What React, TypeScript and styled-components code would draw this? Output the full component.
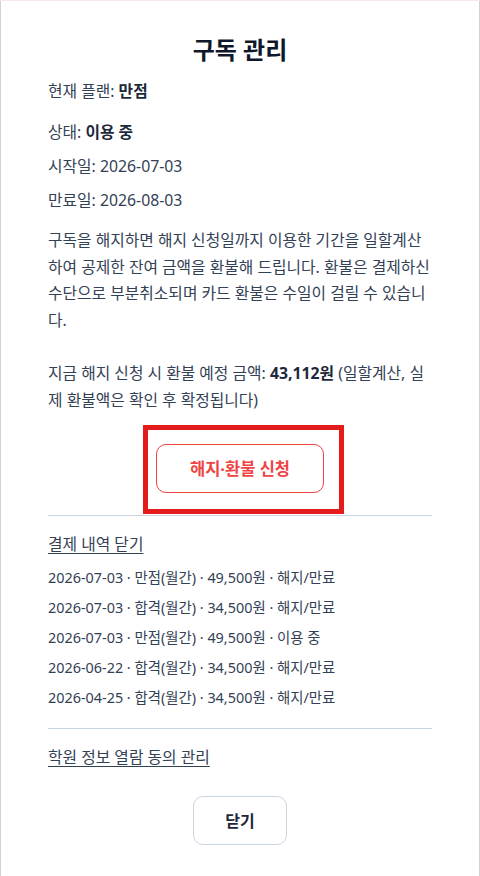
import React from "react";
import styled, { createGlobalStyle } from "styled-components";

const GlobalStyle = createGlobalStyle`
  html, body {
    margin: 0;
    padding: 0;
    background: #fde4e6;
  }
  body {
    font-family: "Noto Sans", "Noto Sans CJK KR", sans-serif;
    -webkit-font-smoothing: antialiased;
  }
  * { box-sizing: border-box; }
`;

const Card = styled.div`
  margin-top: 1px;
  width: 480px;
  min-height: 875px;
  background: #ffffff;
  border-left: 1px solid #cbd5e1;
  border-right: 1px solid #cbd5e1;
  padding: 34px 47px 30px;
  display: flex;
  flex-direction: column;
  color: #334155;
`;

const Title = styled.h2`
  margin: 0 0 16px;
  font-size: 24px;
  line-height: 30px;
  font-weight: 700;
  text-align: center;
  color: #0f172a;
`;

const InfoRow = styled.p<{ $gapTop?: number }>`
  margin: ${(p) => p.$gapTop ?? 0}px 0 0;
  font-size: 15.8px;
  line-height: 20px;
  b { font-weight: 700; color: #1e293b; }
`;

const Notice = styled.p`
  margin: 17px 0 0;
  font-size: 15.8px;
  line-height: 26.67px;
  b { font-weight: 700; color: #1e293b; }
`;

const ActionArea = styled.div`
  position: relative;
  display: flex;
  justify-content: center;
  padding: 30px 0 22px;
`;

const Annotation = styled.div`
  position: absolute;
  left: 95px;
  top: 11px;
  width: 201px;
  height: 89px;
  border: 5px solid #e31b1b;
  pointer-events: none;
`;

const DangerButton = styled.button`
  width: 168px;
  height: 49px;
  border: 1px solid #ef4444;
  border-radius: 10px;
  background: #ffffff;
  color: #ef4444;
  font-family: inherit;
  font-size: 16.5px;
  font-weight: 700;
  cursor: pointer;
`;

const Divider = styled.hr`
  margin: 0;
  border: 0;
  border-top: 1px solid #cbd5e1;
`;

const TextLink = styled.a`
  display: block;
  margin-top: 18px;
  font-size: 15.8px;
  line-height: 20px;
  color: #334155;
  text-decoration: underline;
  text-underline-offset: 3px;
  cursor: pointer;
`;

const History = styled.ul`
  list-style: none;
  margin: 14px 0 20px;
  padding: 0;
  display: flex;
  flex-direction: column;
  gap: 10px;
`;

const HistoryItem = styled.li`
  font-size: 14.4px;
  line-height: 20px;
  color: #334155;
`;

const Footer = styled.div`
  display: flex;
  justify-content: center;
  margin-top: 29px;
`;

const CloseButton = styled.button`
  width: 94px;
  height: 49px;
  border: 1px solid #cbd5e1;
  border-radius: 10px;
  background: #ffffff;
  color: #1e293b;
  font-family: inherit;
  font-size: 16px;
  font-weight: 700;
  cursor: pointer;
`;

const history = [
  "2026-07-03 · 만점(월간) · 49,500원 · 해지/만료",
  "2026-07-03 · 합격(월간) · 34,500원 · 해지/만료",
  "2026-07-03 · 만점(월간) · 49,500원 · 이용 중",
  "2026-06-22 · 합격(월간) · 34,500원 · 해지/만료",
  "2026-04-25 · 합격(월간) · 34,500원 · 해지/만료",
];

export default function App() {
  return (
    <>
      <GlobalStyle />
      <Card>
        <Title>구독 관리</Title>
        <InfoRow>
          현재 플랜: <b>만점</b>
        </InfoRow>
        <InfoRow $gapTop={21}>
          상태: <b>이용 중</b>
        </InfoRow>
        <InfoRow $gapTop={14}>시작일: 2026-07-03</InfoRow>
        <InfoRow $gapTop={14}>만료일: 2026-08-03</InfoRow>
        <Notice>
          구독을 해지하면 해지 신청일까지 이용한 기간을 일할계산하여 공제한 잔여 금액을 환불해 드립니다. 환불은
          결제하신 수단으로 부분취소되며 카드 환불은 수일이 걸릴 수 있습니다.
          <br />
          <br />
          지금 해지 신청 시 환불 예정 금액: <b>43,112원</b> (일할계산, 실제 환불액은 확인 후 확정됩니다)
        </Notice>
        <ActionArea>
          <DangerButton>해지·환불 신청</DangerButton>
          <Annotation />
        </ActionArea>
        <Divider />
        <TextLink>결제 내역 닫기</TextLink>
        <History>
          {history.map((h, i) => (
            <HistoryItem key={i}>{h}</HistoryItem>
          ))}
        </History>
        <Divider />
        <TextLink>학원 정보 열람 동의 관리</TextLink>
        <Footer>
          <CloseButton>닫기</CloseButton>
        </Footer>
      </Card>
    </>
  );
}
